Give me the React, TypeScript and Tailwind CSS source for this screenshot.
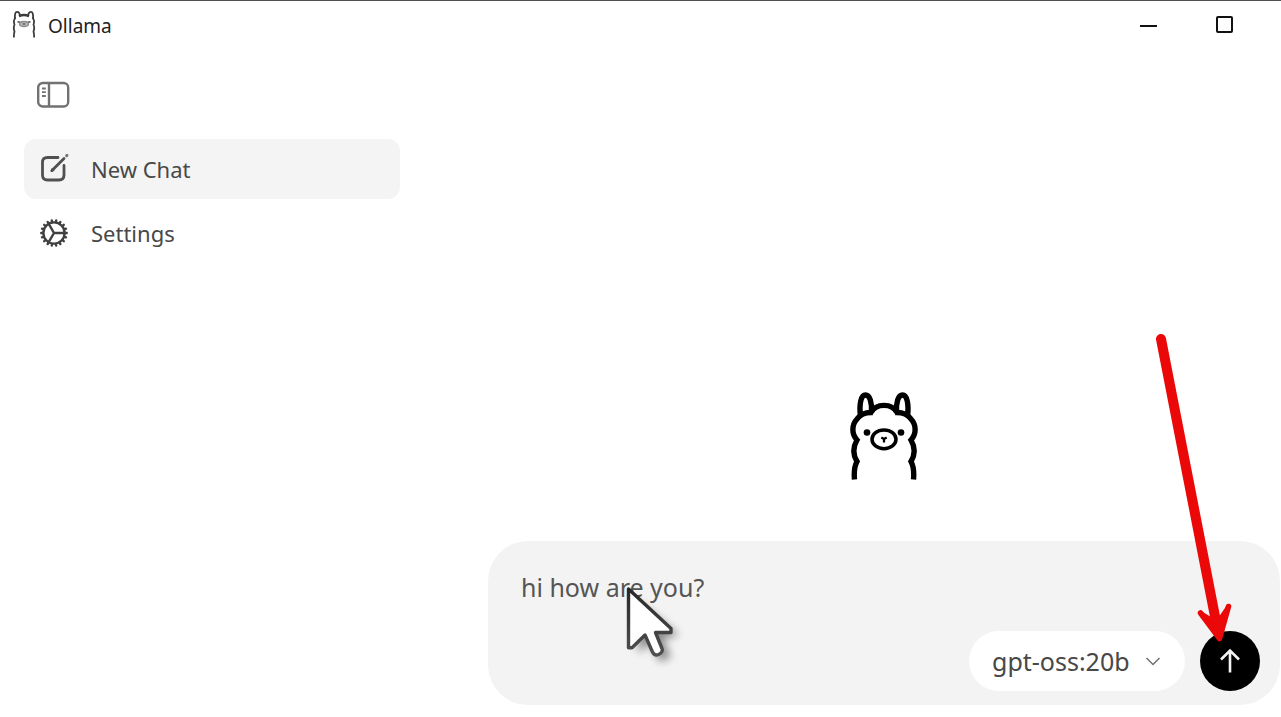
import { useState } from "react";
import { HiOutlineCog } from "react-icons/hi2";

function TitleLlama() {
  return (
    <svg width="24" height="30" viewBox="0 0 24 30" fill="none" stroke="#3c3c3c" strokeWidth="1.800" aria-hidden="true">
      <path d="M3 9C2.500 4 3.500 1.800 5 1.800C7 1.800 8 4 8 6.500M16 6.500C16 4 17 1.800 19 1.800C20.500 1.800 21.500 4 21 9" />
      <path d="M7 6.200C10 4.800 14 4.800 17 6.200" strokeWidth="2.400" />
      <path d="M3.500 7.500C1.800 9.500 1.500 12 2.500 14.500C1.500 17 1.500 19 2.500 21.500C1.800 24 1.800 25.500 2 27.500M20.500 7.500C22.200 9.500 22.500 12 21.500 14.500C22.500 17 22.500 19 21.500 21.500C22.200 24 22.200 25.500 22 27.500" />
      <path d="M5.500 12H8M16 12H18.500" stroke="#777" />
      <ellipse cx="12" cy="14" rx="4.500" ry="2.500" fill="#bbb" stroke="#8a8a8a" strokeWidth="1.300" />
      <path d="M10.500 14H13.500" stroke="#666" strokeWidth="1.500" />
    </svg>
  );
}

function Llama() {
  return (
    <svg width="68" height="90" viewBox="0 0 68 90" fill="none" stroke="#000" strokeWidth="5.400" aria-label="Ollama" role="img">
      <path d="M10.500 25C9 13 11 4 15.500 4C20 4 22 12 21.500 21M57.500 25C59 13 57 4 52.500 4C48 4 46 12 46.500 21" />
      <path d="M21 21.500C26 12 42 12 47 21.500M23 21.500C15 21 10.500 23 7 28C1.500 34 1.500 43 7 49C3 56 3 64 7 70.500C4 76 3.800 81 4.500 88.500M45 21.500C53 21 57.500 23 61 28C66.500 34 66.500 43 61 49C65 56 65 64 61 70.500C64 76 64.200 81 63.500 88.500" />
      <ellipse cx="34" cy="48.300" rx="12" ry="9.400" strokeWidth="3.500" />
      <circle cx="17" cy="41.500" r="3.300" fill="#000" stroke="none" />
      <circle cx="51" cy="41.500" r="3.300" fill="#000" stroke="none" />
      <path d="M31.300 46.500L34 48L36.700 46.500M34 47.500V51.500" strokeWidth="2.300" />
    </svg>
  );
}

function SidebarIcon() {
  return (
    <svg width="34" height="28" viewBox="0 0 34 28" fill="none" stroke="#727272" strokeWidth="2.400" aria-hidden="true">
      <rect x="2.200" y="2" width="30" height="23.500" rx="4.500" />
      <path d="M13 2V25.500" />
      <path d="M6 7.500H9.800M6 11.200H9.800M6 15H9.800" strokeWidth="1.800" />
    </svg>
  );
}

function ComposeIcon() {
  return (
    <svg width="32" height="32" viewBox="0 0 32 32" fill="none" stroke="#505050" strokeWidth="2.800" strokeLinecap="round" aria-hidden="true">
      <path d="M19 4.500H8.500Q3.500 4.500 3.500 9.500V22Q3.500 27 8.500 27H20Q25 27 25 22V12.500" />
      <path d="M13 17.500L25 5.500" strokeWidth="2.800" />
      <path d="M12.300 18.500L15 17.500L13.300 15.800Z" strokeWidth="1" fill="#505050" />
      <path d="M27.600 2.700L28 2.300" strokeWidth="3" stroke="#777" />
    </svg>
  );
}

function Pointer() {
  return (
    <svg className="pointer-events-none absolute top-10 left-34" width="72" height="90" viewBox="0 0 72 90" aria-hidden="true">
      <defs>
        <filter id="shade" x="-40%" y="-40%" width="190%" height="190%">
          <feGaussianBlur stdDeviation="4" />
        </filter>
        <linearGradient id="edge" x1="0" y1="0" x2="0" y2="1">
          <stop offset="0" stopColor="#282828" />
          <stop offset="1" stopColor="#505050" />
        </linearGradient>
      </defs>
      <path d="M14 20L55 54L39 58L47 76L36 81L26 62L14 72Z" fill="#000" opacity="0.420" filter="url(#shade)" />
      <path
        d="M4.500 8V66.800H8L21 54L28.500 71Q30.500 75 34.500 73.500Q39.500 71 38 67.500L31.500 51.500H47V47.500Z"
        fill="#fff"
        stroke="url(#edge)"
        strokeWidth="3.400"
        strokeLinejoin="round"
      />
    </svg>
  );
}

function RedArrow() {
  return (
    <svg className="pointer-events-none absolute right-12 bottom-14" width="88" height="320" viewBox="0 0 88 320" fill="none" stroke="#eb0808" strokeLinecap="round" strokeLinejoin="round" aria-hidden="true">
      <path d="M17 10L71.500 290" strokeWidth="10" />
      <path d="M56.500 284L75.500 309.500L84.500 277.500" strokeWidth="5.500" />
      <path d="M56.500 284L75.500 309.500L84.500 277.500L73 294Z" fill="#eb0808" strokeWidth="4" />
    </svg>
  );
}

export default function App() {
  const [message, setMessage] = useState("hi how are you?");

  return (
    <div className="flex min-h-screen flex-col overflow-hidden border-t border-[#505050] bg-white font-['Noto_Sans','Open_Sans',sans-serif] text-[#484848]">
      <header className="flex h-12 items-center justify-between pr-9 pl-3">
        <div className="flex items-center gap-3">
          <TitleLlama />
          <h1 className="pt-0.5 text-[19px] leading-6 text-[#222]">Ollama</h1>
        </div>
        <div className="flex gap-9">
          <button type="button" aria-label="Minimize" className="flex size-10 items-center justify-center">
            <svg width="18" height="18" viewBox="0 0 18 18" stroke="#111" strokeWidth="2" aria-hidden="true">
              <path d="M0 10H17" />
            </svg>
          </button>
          <button type="button" aria-label="Maximize" className="flex size-10 items-center justify-center">
            <svg width="18" height="18" viewBox="0 0 18 18" fill="none" stroke="#111" strokeWidth="2" aria-hidden="true">
              <rect x="1" y="1" width="15" height="15" rx="1" />
            </svg>
          </button>
        </div>
      </header>

      <div className="flex flex-1">
        <aside className="w-1/3 max-w-[400px] shrink-0 pt-8 pl-6">
          <button type="button" aria-label="Toggle sidebar" className="ml-3 block">
            <SidebarIcon />
          </button>
          <nav className="mt-[30px] flex flex-col gap-1">
            <a href="#new" className="flex h-15 items-center gap-5 rounded-xl bg-[#f4f4f4] pl-[15px] text-[22px] leading-8">
              <ComposeIcon />
              New Chat
            </a>
            <a href="#settings" className="flex h-15 items-center gap-5 rounded-xl pl-[15px] text-[22px] leading-8">
              <span className="flex w-8">
                <HiOutlineCog className="-ml-0.5 size-[34px] shrink-0 text-[#404040]" strokeWidth={1.7} />
              </span>
              Settings
            </a>
          </nav>
        </aside>

        <main className="flex flex-1 flex-col items-center justify-end pr-px pb-3 pl-[88px]">
          <Llama />
          <form
            onSubmit={(event) => event.preventDefault()}
            className="relative mt-[60px] w-full rounded-[40px] bg-[#f3f3f3] pt-7 pr-5 pb-[14px] pl-[33px]"
          >
            <textarea
              aria-label="Message"
              rows={1}
              value={message}
              onChange={(event) => setMessage(event.target.value)}
              className="block h-[62px] w-full resize-none bg-transparent text-[25px] leading-9 text-[#555] outline-none"
            />
            <div className="flex items-center justify-end gap-[15px]">
              <div className="relative">
                <select
                  aria-label="Model"
                  className="h-15 w-[216px] appearance-none rounded-full bg-white pt-0.5 pl-[23px] text-[25px] text-[#484848]"
                >
                  <option>gpt-oss:20b</option>
                </select>
                <svg className="pointer-events-none absolute top-6 right-6" width="16" height="12" viewBox="0 0 16 12" fill="none" stroke="#707070" strokeWidth="1.500" aria-hidden="true">
                  <path d="M1.500 3L8 9.500L14.500 3" />
                </svg>
              </div>
              <button type="submit" aria-label="Send" className="flex size-15 items-center justify-center rounded-full bg-black">
                <svg width="24" height="28" viewBox="0 0 24 28" fill="none" stroke="#f4f4f4" strokeWidth="2.600" aria-hidden="true">
                  <path d="M12 25.500V4M3 12.500L12 3.500L21 12.500" />
                </svg>
              </button>
            </div>
            <Pointer />
            <RedArrow />
          </form>
        </main>
      </div>
    </div>
  );
}
